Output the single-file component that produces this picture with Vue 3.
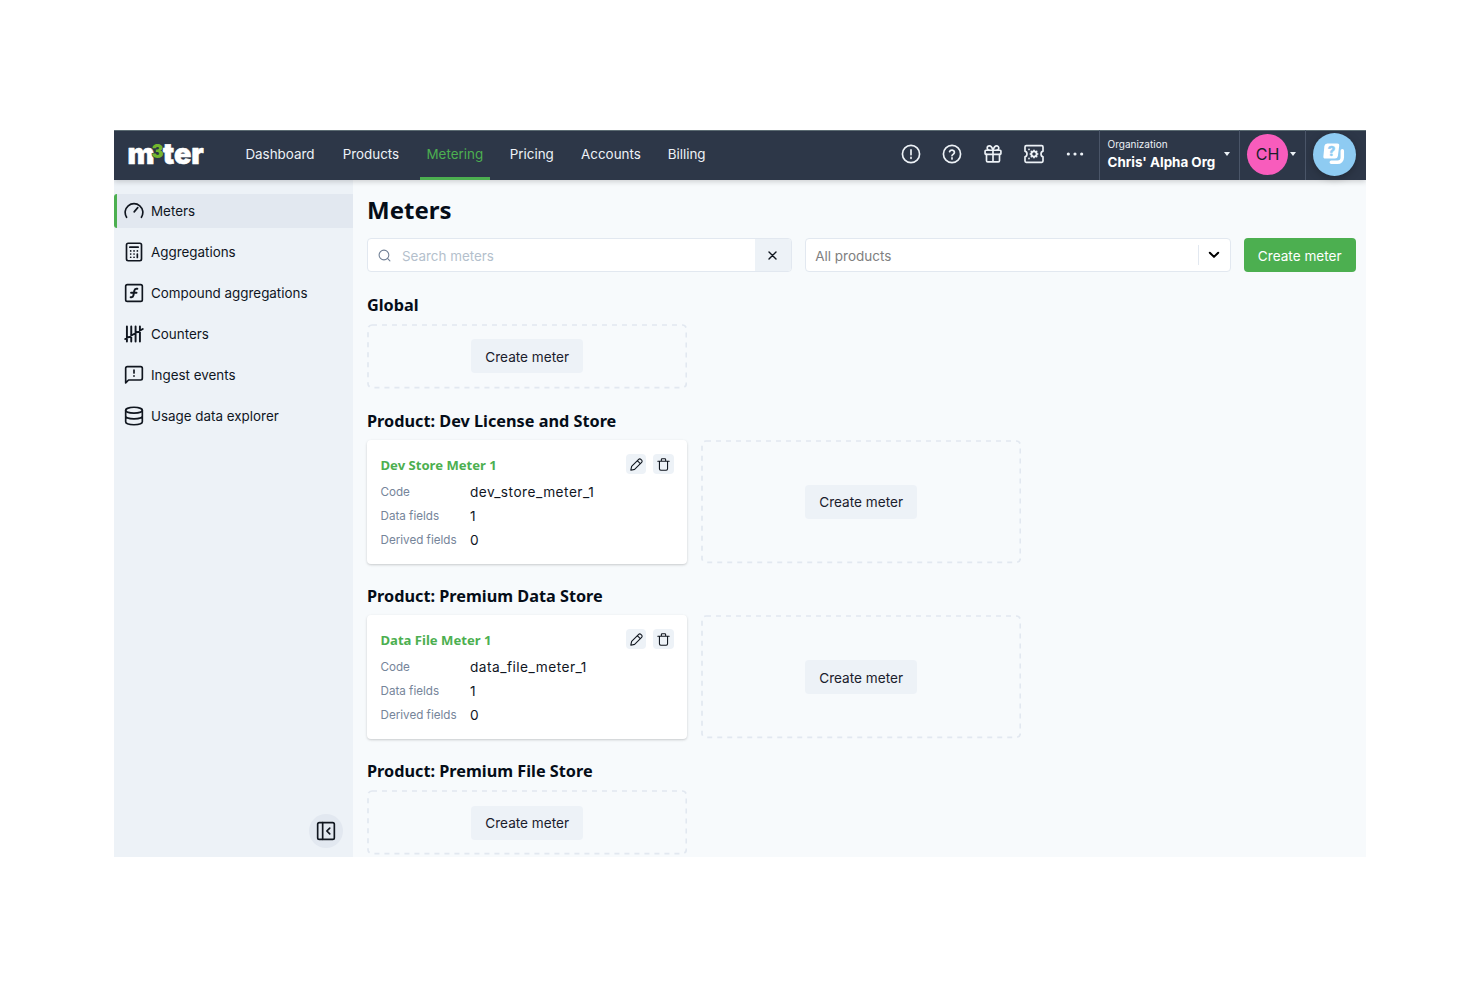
<template>
  <div class="app">
    <header class="topbar">
      <svg class="logo" width="78" height="28" viewBox="0 0 78 28">
        <text class="logo-word" x="-0.6" y="23.5" textLength="27" lengthAdjust="spacingAndGlyphs">m</text>
        <text class="logo-word" x="34.8" y="23.5" textLength="41" lengthAdjust="spacingAndGlyphs">ter</text>
        <text class="logo-three" x="23.5" y="17.6" textLength="12" lengthAdjust="spacingAndGlyphs">3</text>
      </svg>

      <nav class="nav">
        <a
          v-for="item in navItems"
          :key="item.label"
          class="nav-item"
          :class="{ active: item.label === 'Metering' }"
          :style="{ width: item.width + 'px' }"
        >{{ item.label }}</a>
      </nav>

      <div class="tools">
        <svg class="tool" viewBox="0 0 24 24">
          <circle cx="12" cy="12" r="10.3" />
          <path d="M12 7v6M12 16v1.4" />
        </svg>
        <svg class="tool" viewBox="0 0 24 24">
          <circle cx="12" cy="12" r="10.3" />
          <path d="M9.1 9.2a3 3 0 0 1 5.8 1c0 2-2.9 2.3-2.9 4M12 16.6v1.3" />
        </svg>
        <svg class="tool" viewBox="0 0 24 24">
          <rect x="2.5" y="7.5" width="19" height="5" rx="1" />
          <path d="M4.2 12.5V20a1.5 1.5 0 0 0 1.5 1.5h12.6a1.5 1.5 0 0 0 1.5-1.5v-7.5M12 7.5v14M12 7.5C11 4 9.5 2.2 7.7 2.2a2.65 2.65 0 0 0 0 5.3M12 7.5c1-3.5 2.5-5.3 4.3-5.3a2.65 2.65 0 0 1 0 5.3" />
        </svg>
        <svg class="tool" viewBox="0 0 24 24">
          <path d="M1.2 8.6V3.5A1.5 1.5 0 0 1 2.7 2h18.600a1.5 1.5 0 0 1 1.5 1.5v5.100c-1.600.4-2.400 1.700-2.400 3.400s.8 3 2.400 3.400v5.100a1.500 1.500 0 0 1-1.500 1.500H2.700a1.500 1.500 0 0 1-1.500-1.500v-5.100C2.800 15 3.600 13.700 3.600 12s-.8-3-2.400-3.400z" />
          <circle class="gear" cx="12" cy="12" r="3.2" />
          <path d="M12 7.5v1M12 15.5v1M7.5 12h1M15.5 12h1M8.8 8.8l.8.8M14.4 14.4l.8.8M8.8 15.2l.8-.8M14.4 9.6l.8-.8M6 6.300v.4M6 17.300v.4" />
        </svg>
        <svg class="tool dots" viewBox="0 0 24 24">
          <circle cx="4" cy="12" r="1.9" />
          <circle cx="12" cy="12" r="1.9" />
          <circle cx="20" cy="12" r="1.9" />
        </svg>
      </div>

      <div class="org">
        <div class="org-text">
          <span class="org-label">Organization</span>
          <span class="org-name">Chris' Alpha Org</span>
        </div>
        <span class="caret"></span>
      </div>
      <div class="user">
        <span class="avatar">CH</span>
        <span class="caret"></span>
      </div>
      <div class="help">
        <span class="help-button">
          <svg width="22" height="22" viewBox="0 0 22 22">
            <path class="help-back" d="M19.3 7.8v6.7a4.8 4.8 0 0 1-4.8 4.8H8.3" />
            <path class="help-front" d="M4.3.5h9.9a2 2 0 0 1 2 2.3l-1.3 10.2a3 3 0 0 1-3 2.6H2.4a2 2 0 0 1-2-2.3L1.4 3A3 3 0 0 1 4.3.5z" />
            <text x="8.5" y="12.5" text-anchor="middle">?</text>
          </svg>
        </span>
      </div>
    </header>

    <div class="body">
      <aside class="sidebar">
        <a class="side-item active">
          <svg class="side-icon" viewBox="0 0 24 24">
            <path d="M3.1 19.5a10.6 10.6 0 1 1 17.8 0" />
            <path d="M12.2 13l4.3-5" />
          </svg>
          <span>Meters</span>
        </a>
        <a class="side-item">
          <svg class="side-icon" viewBox="0 0 24 24">
            <rect x="3" y="1.5" width="18" height="21" rx="2" />
            <path d="M7 6.2h10" />
            <path d="M8 10.7h.1M12 10.7h.1M16 10.7h.1M8 14.5h.1M12 14.5h.1M8 18.3h.1M12 18.3h.1" />
            <path d="M16 14.5v4" />
          </svg>
          <span>Aggregations</span>
        </a>
        <a class="side-item">
          <svg class="side-icon" viewBox="0 0 24 24">
            <rect x="2" y="2" width="20" height="20" rx="2" />
            <path class="thick" d="M16 7h-1.2c-1.5 0-2.1.7-2.4 2.2l-1.1 5.6c-.3 1.5-.9 2.2-2.3 2.2H8M8.5 11.7h6.5" />
          </svg>
          <span>Compound aggregations</span>
        </a>
        <a class="side-item">
          <svg class="side-icon" viewBox="0 0 24 24">
            <path class="tally" d="M3.5 3v18M8.7 3v18M13.9 3v18M19.1 3v18M1.500 18L22.500 6" />
          </svg>
          <span>Counters</span>
        </a>
        <a class="side-item">
          <svg class="side-icon" viewBox="0 0 24 24">
            <path d="M2 21.5V4a2 2 0 0 1 2-2h16a2 2 0 0 1 2 2v12a2 2 0 0 1-2 2H5.5z" />
            <path d="M12 6v3.500M12 13v.5" />
          </svg>
          <span>Ingest events</span>
        </a>
        <a class="side-item">
          <svg class="side-icon" viewBox="0 0 24 24">
            <ellipse cx="12" cy="5" rx="10" ry="3.5" />
            <path d="M2 5v14c0 2 4.5 3.5 10 3.5S22 21 22 19V5M2 12c0 2 4.5 3.5 10 3.5S22 14 22 12" />
          </svg>
          <span>Usage data explorer</span>
        </a>

        <button class="collapse">
          <svg width="20" height="20" viewBox="0 0 24 24">
            <rect x="2" y="2" width="20" height="20" rx="2" />
            <path d="M8 2v20M16.5 8.5L13 12l3.5 3.5" />
          </svg>
        </button>
      </aside>

      <main class="main">
        <h1>Meters</h1>

        <div class="filters">
          <div class="search">
            <svg class="search-icon" viewBox="0 0 24 24">
              <circle cx="11" cy="11" r="9" />
              <path d="M17.5 17.5L22 22" />
            </svg>
            <span class="placeholder">Search meters</span>
            <button class="clear">
              <svg width="9" height="9" viewBox="0 0 9 9"><path d="M1 1l7 7M8 1l-7 7" /></svg>
            </button>
          </div>
          <div class="select">
            <span class="select-value">All products</span>
            <span class="select-arrow">
              <svg width="12" height="8" viewBox="0 0 12 8"><path d="M1.8 1.7L6 5.9l4.2-4.2" /></svg>
            </span>
          </div>
          <button class="btn primary">Create meter</button>
        </div>

        <section v-for="group in groups" :key="group.title" class="group">
          <h2>{{ group.title }}</h2>
          <div class="cards">
            <article v-for="meter in group.meters" :key="meter.code" class="card">
              <div class="card-head">
                <h3>{{ meter.name }}</h3>
                <div class="actions">
                  <button class="icon-btn">
                    <svg viewBox="0 0 24 24">
                      <path d="M1.5 22.5l1.5-7L16 2.5a2.8 2.8 0 0 1 4 0l1.5 1.5a2.8 2.8 0 0 1 0 4L8.5 21zM13.5 5l5.5 5.5" />
                    </svg>
                  </button>
                  <button class="icon-btn">
                    <svg viewBox="0 0 24 24">
                      <path d="M1.5 6h21M4.5 6v14a2.5 2.5 0 0 0 2.5 2.5h10a2.5 2.5 0 0 0 2.5-2.5V6M8 6V3a1.5 1.5 0 0 1 1.5-1.5h5A1.5 1.5 0 0 1 16 3v3" />
                    </svg>
                  </button>
                </div>
              </div>
              <dl>
                <dt>Code</dt><dd class="code">{{ meter.code }}</dd>
                <dt>Data fields</dt><dd>{{ meter.dataFields }}</dd>
                <dt>Derived fields</dt><dd>{{ meter.derivedFields }}</dd>
              </dl>
            </article>
            <div class="empty">
              <!-- stroked rect instead of a dashed border to control dash length -->
              <svg class="empty-outline">
                <rect x="1" y="1" rx="4" />
              </svg>
              <button class="btn">Create meter</button>
            </div>
          </div>
        </section>
      </main>
    </div>
  </div>
</template>

<script setup>
const navItems = [
  { label: 'Dashboard', width: 83.5 },
  { label: 'Products', width: 71 },
  { label: 'Metering', width: 69.5 },
  { label: 'Pricing', width: 57 },
  { label: 'Accounts', width: 74 },
  { label: 'Billing', width: 50 },
]

const groups = [
  { title: 'Global', meters: [] },
  {
    title: 'Product: Dev License and Store',
    meters: [{ name: 'Dev Store Meter 1', code: 'dev_store_meter_1', dataFields: 1, derivedFields: 0 }],
  },
  {
    title: 'Product: Premium Data Store',
    meters: [{ name: 'Data File Meter 1', code: 'data_file_meter_1', dataFields: 1, derivedFields: 0 }],
  },
  { title: 'Product: Premium File Store', meters: [] },
]
</script>

<style>
body {
  background: #fff;
}
</style>

<style scoped>
* {
  box-sizing: border-box;
}

.app {
  width: 1252px;
  height: 727px;
  margin: 130px 0 0 114px;
  display: flex;
  flex-direction: column;
  overflow: hidden;
  background: #f7fafc;
  color: #10161f;
  font-family: Inter, "Liberation Sans", sans-serif;
  font-size: 13.4px;
}

svg {
  fill: none;
  stroke: currentColor;
  stroke-width: 2;
  stroke-linecap: round;
  stroke-linejoin: round;
  flex: none;
}

button {
  border: 0;
  padding: 0;
  font: inherit;
  color: inherit;
}

h1, h2, h3, dl, dd {
  margin: 0;
}

h1, h2, h3 {
  font-family: "Noto Sans", "Open Sans", sans-serif;
  font-weight: 700;
  white-space: nowrap;
}

.topbar {
  position: relative;
  z-index: 1;
  flex: none;
  height: 50px;
  display: flex;
  align-items: stretch;
  background: #2d3748;
  box-shadow: inset 0 1px #5b6b72, 0 2px 5px rgba(0, 0, 0, 0.16);
  color: #edf2f7;
}

.logo {
  margin: 10px 0 0 13.5px;
  overflow: visible;
}

.logo text {
  font-family: Inter, sans-serif;
  font-weight: 900;
}

.logo-word {
  fill: #fff;
  stroke: #fff;
  stroke-width: 0.6px;
  font-size: 28.5px;
}

.logo .logo-three {
  fill: #74b72e;
  stroke: #2d3748;
  stroke-width: 1px;
  paint-order: stroke;
  font-size: 19px;
}

.nav {
  display: flex;
  gap: 13.7px;
  margin-left: 32.7px;
}

.nav-item {
  height: 50px;
  display: flex;
  align-items: center;
  justify-content: center;
  border-bottom: 3px solid transparent;
  padding-top: 1px;
  white-space: nowrap;
}

.nav-item.active {
  color: #4caf50;
  border-bottom-color: #4caf50;
  border-radius: 3px 3px 0 0;
}

.tools {
  margin-left: auto;
  display: flex;
  align-items: center;
  gap: 21px;
  padding: 0 14.5px 2px 0;
}

.tool {
  width: 20px;
  height: 20px;
}

.tool.dots {
  fill: currentColor;
  stroke: none;
}

.gear {
  stroke-width: 2.2;
}

.org {
  width: 140px;
  display: flex;
  align-items: center;
  justify-content: space-between;
  border-left: 1px solid #4a5568;
  padding: 0 9px 2px 7.5px;
}

.org-text {
  display: flex;
  flex-direction: column;
  white-space: nowrap;
}

.org-label {
  font-size: 10px;
  line-height: 14px;
}

.org-name {
  margin-top: 1.5px;
  font-size: 13.4px;
  font-weight: 700;
  line-height: 18px;
  color: #fff;
}

.caret {
  border: 3px solid transparent;
  border-top: 4px solid currentColor;
  border-bottom: 0;
}

.user {
  width: 66px;
  display: flex;
  align-items: center;
  gap: 2px;
  border-left: 1px solid #4a5568;
  padding: 0 0 2px 7px;
}

.avatar {
  width: 41px;
  height: 41px;
  display: flex;
  align-items: center;
  justify-content: center;
  border-radius: 50%;
  background: #f85cbc;
  color: #1a202c;
  font-size: 16px;
}

.help {
  width: 61px;
  display: flex;
  align-items: center;
  border-left: 1px solid #4a5568;
  padding: 0 0 2px 6.5px;
}

.help-button {
  width: 43px;
  height: 43px;
  display: flex;
  align-items: center;
  justify-content: center;
  border-radius: 50%;
  background: #8ecbf2;
  box-shadow: 0 2px 8px rgba(0, 0, 0, 0.25);
}

.help-back {
  stroke: #fff;
  stroke-width: 3.5;
}

.help-front {
  fill: #fff;
  stroke: none;
}

.help-button text {
  fill: #8ecbf2;
  stroke: #8ecbf2;
  stroke-width: 0.4px;
  font-size: 13px;
  font-weight: 800;
}

.body {
  flex: 1;
  min-height: 0;
  display: flex;
}

.sidebar {
  width: 239px;
  display: flex;
  flex-direction: column;
  gap: 6.85px;
  padding: 13.7px 0;
  background: #edf2f7;
}

.side-item {
  height: 34.25px;
  display: flex;
  align-items: center;
  gap: 7px;
  border-left: 3px solid transparent;
  padding-left: 7px;
  white-space: nowrap;
}

.side-item span {
  padding-top: 0.4px;
}

.side-item.active {
  background: #e2e8f0;
  border-left-color: #4caf50;
  border-radius: 3px 0 0 3px;
}

.side-icon {
  width: 20px;
  height: 20px;
}

.thick {
  stroke-width: 2.4;
}

.tally {
  stroke-width: 2.3;
}

.collapse {
  width: 34px;
  height: 34px;
  display: flex;
  align-items: center;
  justify-content: center;
  margin: auto 10px -4.5px auto;
  border-radius: 50%;
  background: #e2e8f0;
}

.main {
  flex: 1;
  min-width: 0;
  padding: 13px 10.5px 0 14px;
}

h1 {
  font-size: 24px;
  line-height: 34px;
  color: #050d18;
}

.filters {
  display: flex;
  gap: 13.5px;
  margin-top: 11px;
}

.search,
.select {
  height: 34.3px;
  display: flex;
  align-items: center;
  border: 1px solid #e2e8f0;
  border-radius: 4px;
  background: #fff;
}

.search {
  width: 424.7px;
  overflow: hidden;
}

.search-icon {
  width: 13px;
  height: 13px;
  margin: 0 11px 0 10px;
  color: #718096;
}

.placeholder {
  flex: 1;
  padding-top: 1px;
  color: #b4bfcc;
}

.clear {
  align-self: stretch;
  width: 36px;
  display: flex;
  align-items: center;
  justify-content: center;
  background: #edf2f7;
}

.clear svg {
  stroke-width: 1.4;
}

.select {
  flex: 1;
  justify-content: space-between;
  padding-left: 9px;
  color: #808080;
}

.select-value {
  padding-top: 1px;
  font-size: 13.5px;
}

.select-arrow {
  width: 32px;
  height: 20px;
  display: flex;
  align-items: center;
  justify-content: center;
  border-left: 1px solid #e2e8f0;
  color: #000;
}

.btn {
  width: 111.5px;
  height: 34.3px;
  flex: none;
  border-radius: 4px;
  padding-top: 1px;
  background: #edf2f7;
  color: #1a202c;
  font-size: 13.6px;
}

.btn.primary {
  background: #4caf50;
  color: #fff;
}

.group {
  margin-top: 22.6px;
}

h2 {
  font-size: 16.25px;
  line-height: 20.5px;
  margin-bottom: 8.6px;
  color: #050d18;
}

.cards {
  display: grid;
  grid-template-columns: repeat(2, 320.3px);
  gap: 13.7px;
}

.card {
  height: 123.4px;
  padding: 13.5px;
  border-radius: 4px;
  background: #fff;
  box-shadow: 0 1px 3px rgba(0, 0, 0, 0.12), 0 1px 2px rgba(0, 0, 0, 0.08);
}

.card-head {
  height: 26.5px;
  display: flex;
  align-items: flex-start;
  justify-content: space-between;
}

h3 {
  padding-top: 2.5px;
  font-size: 13.1px;
  line-height: 18px;
  color: #4caf50;
}

.actions {
  display: flex;
  gap: 7px;
}

.icon-btn {
  width: 20.5px;
  height: 20.5px;
  display: flex;
  align-items: center;
  justify-content: center;
  border-radius: 4px;
  background: #edf2f7;
}

.icon-btn svg {
  width: 13px;
  height: 13px;
}

dl {
  display: grid;
  grid-template-columns: 89.5px 1fr;
  grid-auto-rows: 24px;
  align-items: center;
  white-space: nowrap;
}

dt {
  font-size: 11.65px;
  color: #76859a;
}

dd {
  font-size: 13.7px;
}

.code {
  letter-spacing: 0.48px;
}

.empty {
  position: relative;
  min-height: 64.6px;
  display: flex;
  align-items: center;
  justify-content: center;
}

.empty-outline {
  position: absolute;
  inset: 0;
  width: 100%;
  height: 100%;
}

.empty-outline rect {
  width: calc(100% - 2px);
  height: calc(100% - 2px);
  stroke: #e2e8f0;
  stroke-width: 1.7;
  stroke-linecap: butt;
  stroke-dasharray: 5 5;
}
</style>
